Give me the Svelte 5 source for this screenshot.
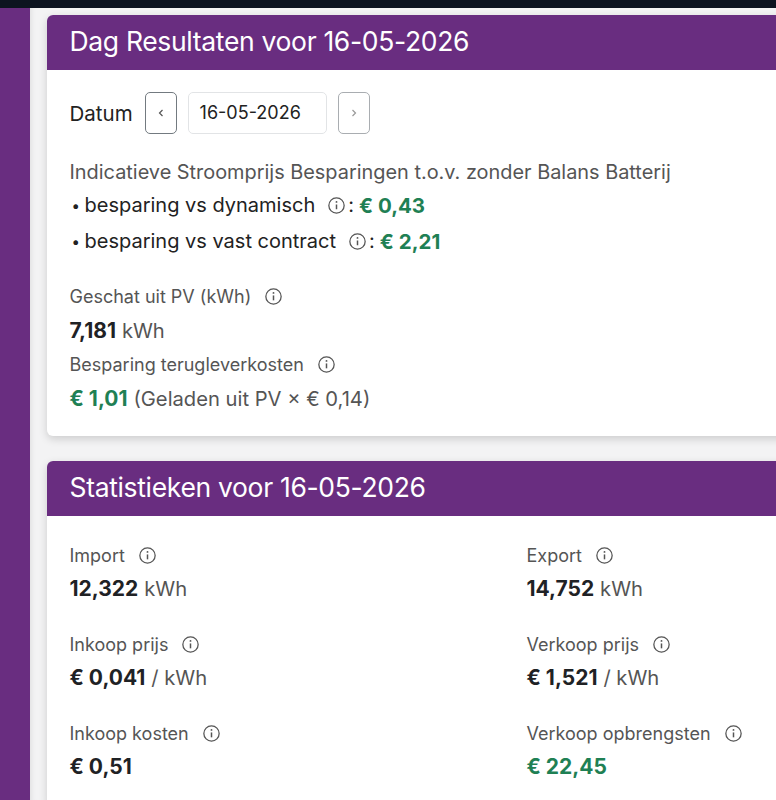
<script>
  const stats = [
    { label: 'Import', value: '12,322', unit: 'kWh' },
    { label: 'Export', value: '14,752', unit: 'kWh' },
    { label: 'Inkoop prijs', value: '€ 0,041', unit: '/ kWh' },
    { label: 'Verkoop prijs', value: '€ 1,521', unit: '/ kWh' },
    { label: 'Inkoop kosten', value: '€ 0,51', unit: '' },
    { label: 'Verkoop opbrengsten', value: '€ 22,45', unit: '', good: true }
  ];
</script>

{#snippet info()}
  <svg class="info" viewBox="0 0 16 16" width="17" height="17" fill="none" stroke="currentColor">
    <circle cx="8" cy="8" r="7.2" stroke-width="1.2" />
    <path d="M8 7v4.6" stroke-width="1.4" />
    <circle cx="8" cy="4.6" r="0.9" fill="currentColor" stroke="none" />
  </svg>
{/snippet}

<div class="topbar"></div>
<div class="shell">
  <aside class="sidebar"></aside>
  <main class="content">
    <section class="card first">
      <h2>Dag Resultaten voor 16-05-2026</h2>
      <div class="body">
        <div class="date-row">
          <span class="date-label">Datum</span>
          <button class="nav prev" aria-label="Vorige">
            <svg viewBox="0 0 8 10" width="8" height="10" fill="none" stroke="currentColor" stroke-width="1.2"><path d="M5.5 2 2.5 5l3 3" /></svg>
          </button>
          <div class="date-input">16-05-2026</div>
          <button class="nav next" aria-label="Volgende">
            <svg viewBox="0 0 8 10" width="8" height="10" fill="none" stroke="currentColor" stroke-width="1.2"><path d="M2.5 2l3 3-3 3" /></svg>
          </button>
        </div>

        <p class="intro">Indicatieve Stroomprijs Besparingen t.o.v. zonder Balans Batterij</p>
        <ul class="savings">
          <li>
            <span>besparing vs dynamisch</span>
            {@render info()}<span class="colon">:</span>
            <strong class="good">€ 0,43</strong>
          </li>
          <li>
            <span>besparing vs vast contract</span>
            {@render info()}<span class="colon">:</span>
            <strong class="good">€ 2,21</strong>
          </li>
        </ul>

        <div class="label pv-label">Geschat uit PV (kWh) {@render info()}</div>
        <div class="value"><strong>7,181</strong> <span class="unit">kWh</span></div>
        <div class="label">Besparing terugleverkosten {@render info()}</div>
        <div class="value"><strong class="good">€ 1,01</strong> <span class="unit">(Geladen uit PV × € 0,14)</span></div>
      </div>
    </section>

    <section class="card">
      <h2>Statistieken voor 16-05-2026</h2>
      <div class="body stats">
        {#each stats as s}
          <div class="stat">
            <div class="label">{s.label} {@render info()}</div>
            <div class="value">
              <strong class:good={s.good}>{s.value}</strong>
              {#if s.unit}<span class="unit">{s.unit}</span>{/if}
            </div>
          </div>
        {/each}
      </div>
    </section>
  </main>
</div>

<style>
  :global(body) {
    margin: 0;
    overflow: hidden;
    font-family: Inter, "Liberation Sans", sans-serif;
    background: #f3f3f4;
  }
  .topbar { height: 8px; background: #0d1420; }
  .shell { display: flex; height: 792px; overflow: hidden; }
  .sidebar { flex: 0 0 30px; background: #692d80; }
  .content { flex: 1; min-width: 0; padding: 7px 0 0 17px; overflow: hidden; box-shadow: inset 6px 0 6px -6px rgba(0,0,0,.12); }
  .card {
    width: 780px;
    margin-bottom: 25px;
    background: #fff;
    border-radius: 6px;
    overflow: hidden;
    box-shadow: 0 3px 9px rgba(0,0,0,.16);
  }
  h2 {
    margin: 0;
    height: 55px;
    padding: 0 22.5px;
    background: #692d80;
    color: #fff;
    font-size: 26.5px;
    font-weight: 400;
    letter-spacing: -0.33px;
    line-height: 53px;
  }
  .body { padding: 22px 22.5px 19px; color: #555; font-size: 18px; }
  .date-row { display: flex; align-items: center; height: 42px; }
  .date-label { color: #222; font-size: 20.5px; margin-right: 12px; }
  .nav {
    display: flex;
    align-items: center;
    justify-content: center;
    width: 32px;
    height: 42px;
    padding: 0;
    background: #fff;
    border: 1px solid #a9adb1;
    border-radius: 5px;
  }
  .prev { border-color: #737a80; color: #555; }
  .next { color: #999; }
  .date-input {
    width: 139px;
    height: 42px;
    box-sizing: border-box;
    margin: 0 11px;
    padding-left: 11px;
    border: 1px solid #e2e4e6;
    border-radius: 5px;
    color: #222;
    font-size: 18px;
    line-height: 40px;
  }
  .intro { margin: 23px 0 0; line-height: 30px; color: #555; font-size: 19.9px; }
  .savings { list-style: none; margin: 0; padding: 0; color: #222; font-size: 20px; }
  .savings li { display: flex; align-items: center; height: 36px; }
  .savings li::before { content: '•'; width: 15px; font-size: 15px; padding-left: 2px; box-sizing: border-box; }
  .savings .info { margin-left: 13px; }
  .colon { margin: 0 5px 0 3px; }
  .savings strong { font-size: 20.5px; }
  .label { display: flex; align-items: center; gap: 14px; height: 31px; color: #555; font-size: 18px; }
  .pv-label { margin-top: 22px; }
  .value { height: 37px; line-height: 37px; font-size: 21px; color: #555; }
  .value .unit { font-size: 20.2px; }
  .value strong { color: #1f2225; font-weight: 700; }
  .value strong.good, .good { color: #1f8054; font-weight: 700; }
  .info { flex: none; color: #555; }
  .stats { display: grid; grid-template-columns: 457px 1fr; row-gap: 20px; padding-top: 24px; }
  .stat .value { height: 38px; line-height: 35px; }
</style>
